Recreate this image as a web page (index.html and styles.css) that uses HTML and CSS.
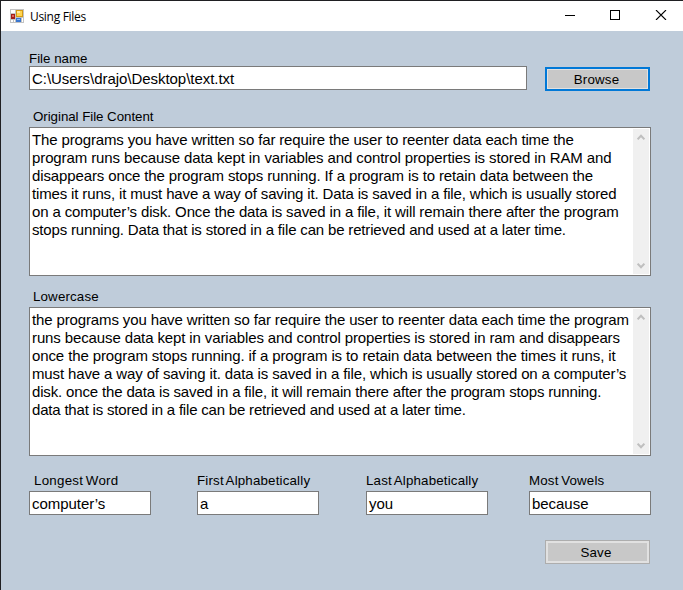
FILE: index.html
```
<!DOCTYPE html>
<html lang="en">
<head>
<meta charset="utf-8">
<title>Using Files</title>
<link rel="stylesheet" href="styles.css">
</head>
<body>
<div class="window">
  <header class="titlebar">
    <svg class="app-icon" width="14" height="14" viewBox="0 0 14 14" shape-rendering="crispEdges">
      <rect width="14" height="14" fill="#c3c3c3"/>
      <path d="M1 1h4v3H1zM1 11h2v2H1zM4 11h1v2H4zM12 9h1v4h-1z" fill="#fff"/>
      <rect x="6" y="1" width="7" height="7" fill="#d49a13"/>
      <rect x="7" y="2" width="5" height="5" fill="#ffd450"/>
      <rect x="7" y="2" width="3" height="2" fill="#ffeaa0"/>
      <rect x="1" y="5" width="4" height="5" fill="#a31d19"/>
      <rect x="2" y="6" width="2" height="2" fill="#e0645a"/>
      <rect x="6" y="9" width="5" height="4" fill="#3976d0"/>
      <rect x="7" y="10" width="3" height="1" fill="#8fbcf5"/>
    </svg>
    <span class="title">Using Files</span>
    <svg class="controls" width="102" height="10" viewBox="0 0 102 10" fill="none" stroke="#000">
      <path d="M0 5.5h10M45.5.5h9v9h-9z" shape-rendering="crispEdges"/>
      <path d="M91 0l10 10M101 0L91 10" stroke-width="1.1"/>
    </svg>
  </header>
  <main class="form">
    <div class="file-row">
      <div class="file">
        <label class="label l-file">File name</label>
        <div class="input">C:\Users\drajo\Desktop\text.txt</div>
      </div>
      <button class="button focused">Browse</button>
    </div>
    <section class="block">
      <label class="label l-block">Original File Content</label>
      <div class="textarea">
        <div class="text original">
          <p>The programs you have written so far require the user to reenter data each time the</p>
          <p>program runs because data kept in variables and control properties is stored in RAM and</p>
          <p>disappears once the program stops running. If a program is to retain data between the</p>
          <p>times it runs, it must have a way of saving it. Data is saved in a file, which is usually stored</p>
          <p>on a computer’s disk. Once the data is saved in a file, it will remain there after the program</p>
          <p>stops running. Data that is stored in a file can be retrieved and used at a later time.</p>
        </div>
        <div class="scrollbar">
          <svg width="8" height="7" viewBox="0 0 8 7"><path d="M.6 5.4L4 1.8l3.4 3.6"/></svg>
          <svg width="8" height="7" viewBox="0 0 8 7"><path d="M.6 1.6L4 5.2l3.4-3.6"/></svg>
        </div>
      </div>
    </section>
    <section class="block">
      <label class="label l-block l-lower">Lowercase</label>
      <div class="textarea">
        <div class="text lowercase">
          <p>the programs you have written so far require the user to reenter data each time the program</p>
          <p>runs because data kept in variables and control properties is stored in ram and disappears</p>
          <p>once the program stops running. if a program is to retain data between the times it runs, it</p>
          <p>must have a way of saving it. data is saved in a file, which is usually stored on a computer’s</p>
          <p>disk. once the data is saved in a file, it will remain there after the program stops running.</p>
          <p>data that is stored in a file can be retrieved and used at a later time.</p>
        </div>
        <div class="scrollbar">
          <svg width="8" height="7" viewBox="0 0 8 7"><path d="M.6 5.4L4 1.8l3.4 3.6"/></svg>
          <svg width="8" height="7" viewBox="0 0 8 7"><path d="M.6 1.6L4 5.2l3.4-3.6"/></svg>
        </div>
      </div>
    </section>
    <div class="results">
      <div><label class="label l-longest">Longest Word</label><div class="input">computer’s</div></div>
      <div><label class="label">First Alphabetically</label><div class="input">a</div></div>
      <div><label class="label">Last Alphabetically</label><div class="input">you</div></div>
      <div><label class="label">Most Vowels</label><div class="input">because</div></div>
    </div>
    <button class="button save">Save</button>
  </main>
</div>
</body>
</html>
```
FILE: styles.css
```
* { box-sizing: border-box; }
body { margin: 0; font-family: "Liberation Sans", Arial, sans-serif; color: #000; }
.window {
  width: 683px;
  height: 590px;
  overflow: hidden;
  border-top: 1px solid #1f1f22;
  border-left: 1px solid #1f1f22;
  background: #bfccda;
}
.titlebar { display: flex; align-items: center; height: 30px; padding: 0 16px 0 9px; background: #fff; }
.title { margin-left: 6px; font: 12px "Open Sans", "Noto Sans", sans-serif; letter-spacing: -0.3px; }
.controls { margin-left: auto; position: relative; top: -1px; }
.form { display: flex; flex-direction: column; padding: 20px 32px 0 28px; }
.label { display: block; height: 16px; font-size: 13.33px; line-height: 16px; white-space: nowrap; }
.file-row { display: flex; justify-content: space-between; align-items: flex-end; height: 40px; padding-right: 1px; }
.file { width: 498px; margin-bottom: 1px; }
.l-file { height: 15px; }
.input {
  height: 24px;
  padding: 0 2px;
  border: 1px solid #7a7a7a;
  background: #fff;
  font-size: 15px;
  line-height: 24px;
  letter-spacing: -0.04px;
  white-space: nowrap;
}
.button {
  width: 105px;
  height: 24px;
  padding: 1px 3px 0 0;
  border: 1px solid #adadad;
  background: #c8c8c8;
  box-shadow: inset 0 0 0 2px #e1e1e1;
  font: 13.33px/20px "Liberation Sans", Arial, sans-serif;
  letter-spacing: 0.2px;
  color: #000;
}
.button.focused { padding-right: 2px; border: 2px solid #0078d7; box-shadow: inset 0 0 0 1px #e1e1e1; }
.block { margin-top: 17px; }
.block + .block { margin-top: 12px; }
.l-block { height: 19px; padding-left: 4px; line-height: 17px; letter-spacing: -0.05px; }
.l-lower { letter-spacing: 0.15px; }
.textarea { display: flex; justify-content: space-between; height: 149px; border: 1px solid #7a7a7a; background: #fff; }
.text { width: 600px; padding: 3px 0 0 2px; font-size: 15px; line-height: 18px; white-space: nowrap; }
.text p { margin: 0; letter-spacing: -0.13px; }
.original p:nth-child(1) { letter-spacing: -0.145px; }
.original p:nth-child(2) { letter-spacing: -0.105px; }
.original p:nth-child(3) { letter-spacing: -0.12px; }
.original p:nth-child(4) { letter-spacing: -0.147px; }
.original p:nth-child(5) { letter-spacing: -0.14px; }
.original p:nth-child(6) { letter-spacing: -0.17px; }
.lowercase p:nth-child(2) { letter-spacing: -0.12px; }
.lowercase p:nth-child(3) { letter-spacing: -0.11px; }
.lowercase p:nth-child(5) { letter-spacing: -0.155px; }
.lowercase p:nth-child(6) { letter-spacing: -0.195px; }
.scrollbar {
  display: flex;
  flex: none;
  flex-direction: column;
  justify-content: space-between;
  align-items: center;
  width: 16px;
  margin: 1px;
  padding: 5px 0 5px;
  background: #f0f0f0;
}
.scrollbar path { fill: none; stroke: #bfbfbf; stroke-width: 2; }
.results {
  display: grid;
  grid-template-columns: 122px 122px 122px 122px;
  column-gap: 46px;
  margin-top: 16px;
}
.results > :nth-child(n+3) { margin-left: 1px; margin-right: -1px; }
.results > :nth-child(4) { margin-left: -4px; margin-right: 4px; }
.results .label { height: 19px; line-height: 17px; letter-spacing: 0.17px; word-spacing: -1.3px; }
.results .l-longest { padding-left: 5px; letter-spacing: 0.25px; }
.save { align-self: flex-end; margin: 25px 1px 0 0; }
```
